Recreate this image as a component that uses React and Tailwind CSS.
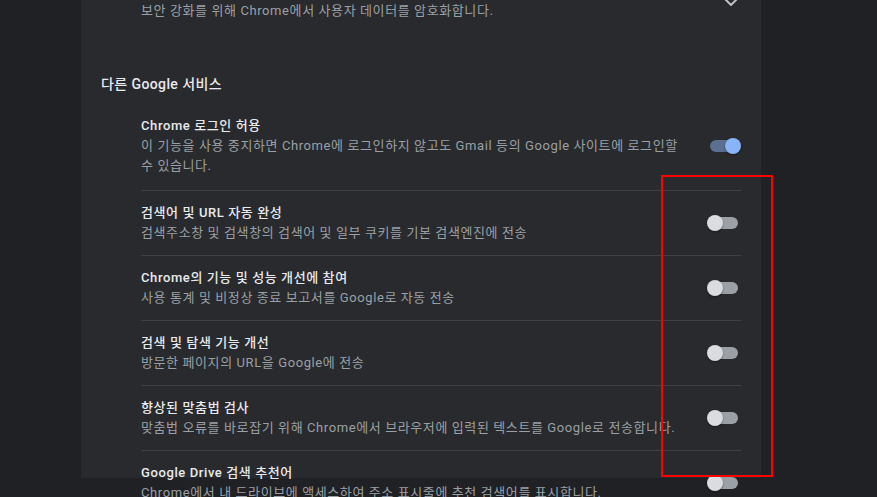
import React from 'react';

// ── Other Google services rows ─────────────────────────────────────
const ROWS = [
  { title: '검색어 및 URL 자동 완성', desc: '검색주소창 및 검색창의 검색어 및 일부 쿠키를 기본 검색엔진에 전송', on: false },
  { title: 'Chrome의 기능 및 성능 개선에 참여', desc: '사용 통계 및 비정상 종료 보고서를 Google로 자동 전송', on: false },
  { title: '검색 및 탐색 기능 개선', desc: '방문한 페이지의 URL을 Google에 전송', on: false },
  { title: '향상된 맞춤법 검사', desc: '맞춤법 오류를 바로잡기 위해 Chrome에서 브라우저에 입력된 텍스트를 Google로 전송합니다.', on: false },
  { title: 'Google Drive 검색 추천어', desc: 'Chrome에서 내 드라이브에 액세스하여 주소 표시줄에 추천 검색어를 표시합니다.', on: false },
];

const Toggle = ({ on }) => (
  <div className="relative w-[34px] h-[12px] shrink-0">
    <div className={`absolute left-[3px] top-0 w-[28px] h-[12px] rounded-full ${on ? 'bg-[#5a6f92]' : 'bg-[#9aa0a6]'}`} />
    <div className={`absolute top-[-2px] w-4 h-4 rounded-full shadow-[0_1px_2px_rgba(0,0,0,0.4)] ${on ? 'left-[18px] bg-[#8ab4f8]' : 'left-0 bg-[#dadce0]'}`} />
  </div>
);

const Row = ({ title, desc, on }) => (
  <div className="flex items-center min-h-[64px] border-t border-[#3f4043] py-3">
    <div className="flex-1 pr-5">
      <div className="text-[13px] leading-5 font-medium text-[#e8eaed] tracking-[0.6px]">{title}</div>
      <div className="text-[13px] leading-5 text-[#9aa0a6] whitespace-nowrap tracking-[0.6px]">{desc}</div>
    </div>
    <Toggle on={on} />
  </div>
);

export default function App() {
  return (
    <div
      className="relative w-full h-[497px] overflow-hidden bg-[#202124] pl-[81px]"
      style={{ fontFamily: 'Roboto, "Noto Sans CJK KR", sans-serif' }}
    >
      <div className="w-[680px] h-full bg-[#292a2d] px-5">
        {/* Encryption row, cut off at the top */}
        <div className="flex items-center ml-10 mt-[-19px]">
          <div className="flex-1">
            <div className="text-[13px] leading-5 font-medium text-[#e8eaed] tracking-[0.6px]">암호화 옵션</div>
            <div className="text-[13px] leading-5 text-[#9aa0a6] tracking-[0.6px]">보안 강화를 위해 Chrome에서 사용자 데이터를 암호화합니다.</div>
          </div>
          <svg width="24" height="24" viewBox="0 0 24 24" fill="none" stroke="#bdc1c6" strokeWidth="2" strokeLinecap="round" strokeLinejoin="round" className="mr-[-2px] mt-[2px]">
            <path d="m6 9 6 6 6-6" />
          </svg>
        </div>

        {/* Section heading */}
        <div className="mt-[53px] text-[14px] leading-5 font-medium text-[#e8eaed] tracking-[0.4px]">다른 Google 서비스</div>

        <div className="ml-10 mt-[10px]">
          {/* Chrome sign-in */}
          <div className="flex items-center pt-3 pb-[14px]">
            <div className="flex-1 pr-5">
              <div className="text-[13px] leading-5 font-medium text-[#e8eaed] tracking-[0.6px]">Chrome 로그인 허용</div>
              <div className="text-[13px] leading-5 text-[#9aa0a6] tracking-[0.6px]">
                <div className="whitespace-nowrap">이 기능을 사용 중지하면 Chrome에 로그인하지 않고도 Gmail 등의 Google 사이트에 로그인할</div>
                <div>수 있습니다.</div>
              </div>
            </div>
            <Toggle on />
          </div>

          {ROWS.map((r, i) => (
            <Row key={i} {...r} />
          ))}
        </div>
      </div>

      {/* Red highlight box */}
      <div className="absolute left-[661px] top-[175px] w-[112px] h-[302px] border-[2px] border-[#ff0000] pointer-events-none" />
    </div>
  );
}
